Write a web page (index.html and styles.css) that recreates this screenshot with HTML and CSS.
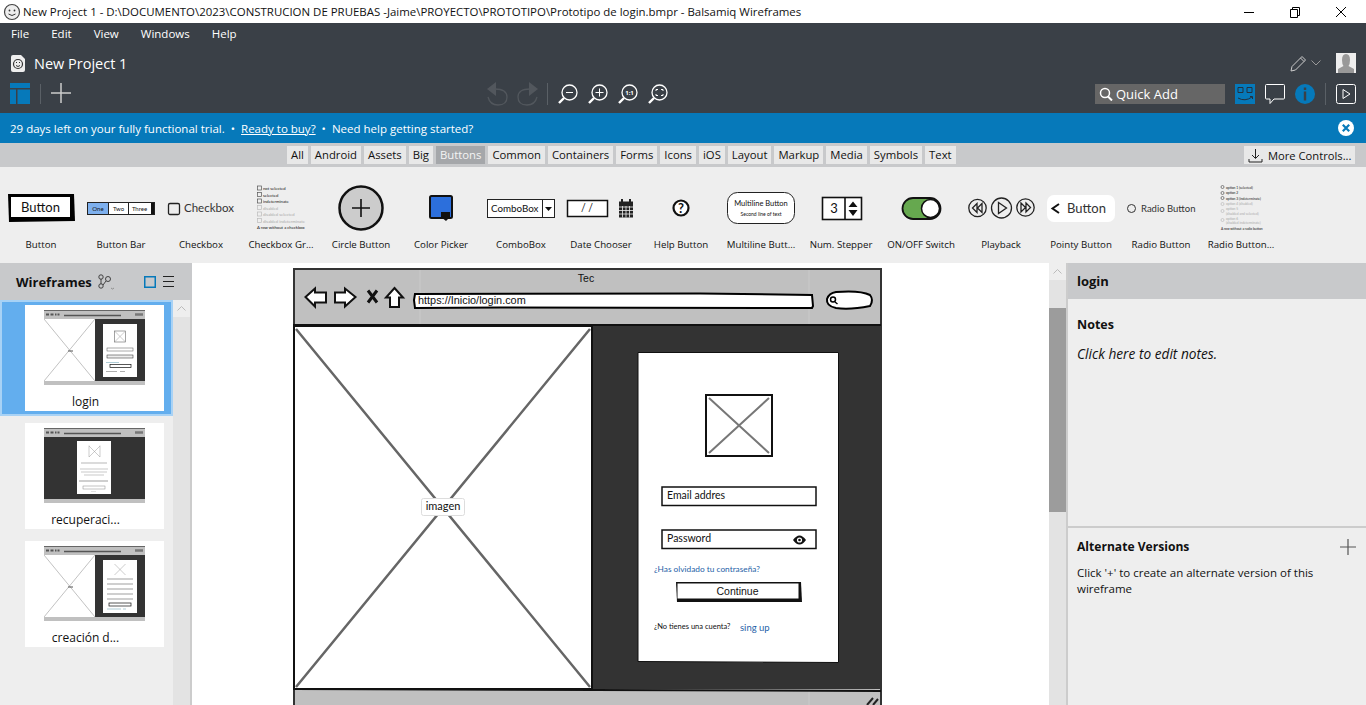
FILE: index.html
```html
<!DOCTYPE html>
<html lang="en">

<head>
    <meta charset="UTF-8">
    <title>New Project 1 - Balsamiq Wireframes</title>
    <link rel="stylesheet" href="styles.css">
</head>

<body>
    <svg class="defs" width="0" height="0">
        <symbol id="lens" viewBox="0 0 20 20">
            <circle cx="11.5" cy="8.5" r="7.5" fill="none" stroke="#fff" stroke-width="1.3"/>
            <path d="M6 14 L1 19" stroke="#fff" stroke-width="2.4"/>
        </symbol>
        <symbol id="thumb-bar" viewBox="0 0 101 75">
            <rect width="101" height="75" fill="#333"/>
            <rect width="101" height="9" fill="#c0c0c0"/>
            <rect y="71" width="101" height="4" fill="#c0c0c0"/>
            <rect width="101" height="1" fill="#666"/>
            <path d="M2 4.500h3M6.500 4.500h3M11 4.500h1.500M13.500 4.500h2" stroke="#555" stroke-width="2"/>
            <path d="M20 5.500 H77" stroke="#555" stroke-width="1.500"/>
            <path d="M91 4.500 H99" stroke="#777" stroke-width="2.500"/>
        </symbol>
    </svg>

    <!-- title bar -->
    <div class="titlebar">
        <svg class="app-face" width="18" height="18" viewBox="0 0 18 18">
            <circle cx="9" cy="9" r="7.500" fill="#eee" stroke="#444" stroke-width="1.200"/>
            <circle cx="6.500" cy="7.500" r=".9" fill="#333"/>
            <circle cx="11.500" cy="7.500" r=".9" fill="#333"/>
            <path d="M5.500 11 Q9 14 12.500 11" fill="none" stroke="#333"/>
        </svg>
        <span class="title-text">New Project 1 - D:\DOCUMENTO\2023\CONSTRUCION DE PRUEBAS -Jaime\PROYECTO\PROTOTIPO\Prototipo de login.bmpr - Balsamiq Wireframes</span>
        <div class="win-btns">
            <svg width="12" height="12" viewBox="0 0 12 12"><path d="M1 6.500H11" stroke="#000"/></svg>
            <svg width="12" height="12" viewBox="0 0 12 12"><path d="M1.500 3.500h7v8h-7z M3.500 3.500v-2h7v8h-2" fill="none" stroke="#000"/></svg>
            <svg width="12" height="12" viewBox="0 0 12 12"><path d="M1 1L11 11M11 1L1 11" stroke="#000"/></svg>
        </div>
    </div>

    <!-- dark header -->
    <header class="topbar">
        <nav class="menu">
            <span>File</span><span>Edit</span><span>View</span><span>Windows</span><span>Help</span>
        </nav>
        <div class="project-row">
            <svg width="14" height="17" viewBox="0 0 14 17">
                <path d="M0 2 Q0 0 2 0 H10 L14 4 V15 Q14 17 12 17 H2 Q0 17 0 15Z" fill="#eee"/>
                <circle cx="7" cy="9" r="4.500" fill="#eee" stroke="#333" stroke-width="1.200"/>
                <path d="M5 10.500 Q7 12.500 9 10.500M5 7.500h1M8 7.500h1" fill="none" stroke="#333"/>
            </svg>
            <span class="project-name">New Project 1</span>
            <div class="project-right">
                <svg width="17" height="17" viewBox="0 0 17 17"><path d="M1 16 L2 11.500 L12 1.500 L15.500 5 L5.500 15Z M10.500 3 L14 6.500" fill="none" stroke="#ccc"/></svg>
                <svg width="10" height="6" viewBox="0 0 10 6"><path d="M.5 .5L5 5L9.500 .5" fill="none" stroke="#999"/></svg>
                <svg class="avatar" width="20" height="20" viewBox="0 0 20 20">
                    <rect width="20" height="20" fill="#eee"/>
                    <path d="M6 7 Q6 1 10 1 Q14 1 14 7 Q14 11 12.500 13 L18 16 V20 H2 V16 L7.500 13 Q6 11 6 7Z" fill="#999"/>
                </svg>
            </div>
        </div>
        <div class="tool-row">
            <svg class="panel-icon" width="20" height="21" viewBox="0 0 20 21"><path d="M0 0H20V5H0ZM0 6.500H6V21H0ZM7.500 6.500H20V21H7.500Z" fill="#0679ba"/></svg>
            <span class="tool-sep"></span>
            <svg class="add-icon" width="20" height="20" viewBox="0 0 20 20"><path d="M10 0V20M0 10H20" stroke="#ccc" stroke-width="1.500"/></svg>
            <div class="tool-center">
                <svg width="21" height="24" viewBox="0 0 21 24">
                    <path d="M9 0 L0 7 L9 14Z" fill="#52575d"/>
                    <path d="M8 7 Q20 7 20 15 Q20 23 11 23 Q3 23 1 15" fill="none" stroke="#52575d" stroke-width="1.300"/>
                </svg>
                <svg width="21" height="24" viewBox="0 0 21 24">
                    <path d="M12 0 L21 7 L12 14Z" fill="#52575d"/>
                    <path d="M13 7 Q1 7 1 15 Q1 23 10 23 Q18 23 20 15" fill="none" stroke="#52575d" stroke-width="1.300"/>
                </svg>
                <span class="tool-sep tall"></span>
                <svg class="zoom-icon" width="20" height="20" viewBox="0 0 20 20"><use href="#lens"/><path d="M8 8.500H15" stroke="#fff"/></svg>
                <svg class="zoom-icon" width="20" height="20" viewBox="0 0 20 20"><use href="#lens"/><path d="M7.500 8.500H15.500M11.500 4.500V12.500" stroke="#fff"/></svg>
                <svg class="zoom-icon" width="20" height="20" viewBox="0 0 20 20"><use href="#lens"/><text x="11.500" y="11" class="one-one">1:1</text></svg>
                <svg class="zoom-icon" width="20" height="20" viewBox="0 0 20 20"><use href="#lens"/><path d="M8 7V5.500H10M13 5.500H15V7M15 10V11.500H13M10 11.500H8V10" fill="none" stroke="#fff"/></svg>
            </div>
            <div class="tool-right">
                <div class="quick-add">
                    <svg width="14" height="14" viewBox="0 0 14 14"><circle cx="6" cy="6" r="4.500" fill="none" stroke="#fff" stroke-width="1.500"/><path d="M9 9.500L13 13.500" stroke="#fff" stroke-width="2"/></svg>
                    <span>Quick Add</span>
                </div>
                <svg width="20" height="20" viewBox="0 0 20 20">
                    <rect width="20" height="20" fill="#0679ba"/>
                    <path d="M3 3.500h5v5h-5zM12 3.500h5v5h-5z" fill="none" stroke="#23313f"/>
                    <path d="M3 14 Q10 18 17 13M15 12.500h2.500v2.500" fill="none" stroke="#23313f"/>
                </svg>
                <svg width="20" height="20" viewBox="0 0 20 20"><path d="M1.500 .5H18.500Q19.500 .5 19.500 1.500V14Q19.500 15 18.500 15H9L5 19.500V15H1.500Q.5 15 .5 14V1.500Q.5 .5 1.500 .5Z" fill="none" stroke="#fff"/></svg>
                <svg width="20" height="20" viewBox="0 0 20 20"><circle cx="10" cy="10" r="10" fill="#0679ba"/><rect x="8.800" y="7.500" width="2.400" height="9" fill="#3a4047"/><rect x="8.800" y="3.500" width="2.400" height="2.500" fill="#3a4047"/></svg>
                <span class="tool-sep tall"></span>
                <svg width="20" height="20" viewBox="0 0 20 20"><rect x=".5" y=".5" width="19" height="19" rx="2" fill="none" stroke="#fff"/><path d="M7 5.500L14 10L7 14.500Z" fill="none" stroke="#fff"/></svg>
            </div>
        </div>
    </header>

    <!-- trial banner -->
    <div class="banner">
        <span>29 days left on your fully functional trial.</span>
        <span class="dot">•</span>
        <a href="#">Ready to buy?</a>
        <span class="dot">•</span>
        <span>Need help getting started?</span>
        <svg class="banner-close" width="16" height="16" viewBox="0 0 16 16"><circle cx="8" cy="8" r="8" fill="#fff"/><path d="M4.800 4.800L11.200 11.200M11.200 4.800L4.800 11.200" stroke="#0679ba" stroke-width="2.200"/></svg>
    </div>

    <!-- library tabs -->
    <div class="tabs">
        <div class="tab-list">
            <span class="tab">All</span><span class="tab">Android</span><span class="tab">Assets</span><span class="tab">Big</span><span class="tab active">Buttons</span><span class="tab">Common</span><span class="tab">Containers</span><span class="tab">Forms</span><span class="tab">Icons</span><span class="tab">iOS</span><span class="tab">Layout</span><span class="tab">Markup</span><span class="tab">Media</span><span class="tab">Symbols</span><span class="tab">Text</span>
        </div>
        <div class="more-controls">
            <svg width="15" height="15" viewBox="0 0 15 15"><path d="M7.500 1V10M4 7L7.500 10.500L11 7M1 11V14H14V11" fill="none" stroke="#222"/></svg>
            <span>More Controls...</span>
        </div>
    </div>

    <!-- component library -->
    <div class="library">
        <div class="lib-item">
            <svg viewBox="0 0 80 60" class="lib-pic">
                <path d="M7 16 L73 16 L74 43 L8 44Z" fill="#000"/>
                <rect x="10" y="19" width="59" height="20" fill="#fff"/>
                <text x="39.500" y="34" class="wf wf-center wf-13">Button</text>
            </svg>
            <span>Button</span>
        </div>
        <div class="lib-item">
            <svg viewBox="0 0 80 60" class="lib-pic">
                <rect x="6.500" y="24.500" width="67" height="12" fill="#fff" stroke="#222"/>
                <rect x="7" y="25" width="20" height="11" fill="#7eb0ee"/>
                <path d="M27.500 25V36M47.500 25V36" stroke="#222"/>
                <path d="M71.500 25V36" stroke="#111" stroke-width="3"/>
                <text x="17" y="33" class="wf wf-center wf-6">One</text>
                <text x="37.500" y="33" class="wf wf-center wf-6">Two</text>
                <text x="58.500" y="33" class="wf wf-center wf-6">Three</text>
            </svg>
            <span>Button Bar</span>
        </div>
        <div class="lib-item">
            <svg viewBox="0 0 80 60" class="lib-pic">
                <rect x="7.500" y="25.500" width="11" height="11" rx="1.500" fill="none" stroke="#222" stroke-width="1.300"/>
                <text x="23" y="34" class="wf wf-12 wf-soft">Checkbox</text>
            </svg>
            <span>Checkbox</span>
        </div>
        <div class="lib-item">
            <svg viewBox="0 0 80 60" class="lib-pic">
                <g fill="none" stroke="#555" stroke-width=".7">
                    <rect x="16.500" y="8" width="4" height="4"/><rect x="16.500" y="14.500" width="4" height="4"/><rect x="16.500" y="21" width="4" height="4"/>
                </g>
                <g fill="none" stroke="#bbb" stroke-width=".7">
                    <rect x="16.500" y="27.500" width="4" height="4"/><rect x="16.500" y="34" width="4" height="4"/><rect x="16.500" y="40.500" width="4" height="4"/>
                </g>
                <text x="22" y="12" class="wf wf-4">not selected</text>
                <text x="22" y="18.500" class="wf wf-4">selected</text>
                <text x="22" y="25" class="wf wf-4">indeterminate</text>
                <text x="22" y="31.500" class="wf wf-4 wf-off">disabled</text>
                <text x="22" y="38" class="wf wf-4 wf-off">disabled selected</text>
                <text x="22" y="44.500" class="wf wf-4 wf-off">disabled indeterminate</text>
                <text x="16" y="51" class="wf wf-4">A row without a checkbox</text>
            </svg>
            <span>Checkbox Gr...</span>
        </div>
        <div class="lib-item">
            <svg viewBox="0 0 80 60" class="lib-pic">
                <circle cx="40" cy="30" r="21.500" fill="#ccc" stroke="#111" stroke-width="2.500"/>
                <path d="M40 21V39M31 30H49" stroke="#111" stroke-width="1.600"/>
            </svg>
            <span>Circle Button</span>
        </div>
        <div class="lib-item">
            <svg viewBox="0 0 80 60" class="lib-pic">
                <rect x="29" y="18" width="22" height="22" rx="1.500" fill="#2c6fdc" stroke="#111" stroke-width="2"/>
                <path d="M40 34H49V39L45 43L40 39Z" fill="#111"/>
            </svg>
            <span>Color Picker</span>
        </div>
        <div class="lib-item">
            <svg viewBox="0 0 80 60" class="lib-pic">
                <rect x="6.500" y="21.500" width="67" height="18" fill="#fff" stroke="#222"/>
                <path d="M61.500 21.500V39.500" stroke="#222"/>
                <path d="M64 29H71L67.500 33Z" fill="#111"/>
                <text x="10" y="34" class="wf wf-10b">ComboBox</text>
            </svg>
            <span>ComboBox</span>
        </div>
        <div class="lib-item">
            <svg viewBox="0 0 80 60" class="lib-pic">
                <rect x="6.500" y="22.500" width="40" height="16" fill="#fff" stroke="#111" stroke-width="1.500"/>
                <text x="26" y="34" class="wf wf-center wf-10">/  /</text>
                <path d="M58 23.500H72V39.500H58Z" fill="#222"/>
                <path d="M61 21V25M69 21V25" stroke="#222" stroke-width="2"/>
                <path d="M58 29H72M58 32.500H72M58 36H72M61.500 28V39.500M65 28V39.500M68.500 28V39.500" stroke="#eee" stroke-width=".8"/>
            </svg>
            <span>Date Chooser</span>
        </div>
        <div class="lib-item">
            <svg viewBox="0 0 80 60" class="lib-pic">
                <circle cx="40" cy="30" r="7.500" fill="#fff" stroke="#111" stroke-width="2.200"/>
                <text x="40" y="34.500" class="wf wf-center wf-13 wf-bold">?</text>
            </svg>
            <span>Help Button</span>
        </div>
        <div class="lib-item">
            <svg viewBox="0 0 80 60" class="lib-pic">
                <rect x="6.500" y="14.500" width="67" height="31" rx="10" fill="#fff" stroke="#222"/>
                <text x="40" y="27.500" class="wf wf-center wf-7">Multiline Button</text>
                <text x="40" y="37.500" class="wf wf-center wf-5">Second line of text</text>
            </svg>
            <span>Multiline Butt...</span>
        </div>
        <div class="lib-item">
            <svg viewBox="0 0 80 60" class="lib-pic">
                <rect x="21.500" y="19.500" width="39" height="22" fill="#fff" stroke="#111" stroke-width="1.600"/>
                <path d="M44 19.500V41.500" stroke="#111" stroke-width="1.600"/>
                <path d="M47.500 29H56.500L52 23.500ZM47.500 32H56.500L52 38Z" fill="#111"/>
                <text x="33" y="35" class="wf wf-center wf-13">3</text>
            </svg>
            <span>Num. Stepper</span>
        </div>
        <div class="lib-item">
            <svg viewBox="0 0 80 60" class="lib-pic">
                <rect x="21.500" y="20" width="38" height="21" rx="10.500" fill="#66a84f" stroke="#111" stroke-width="1.800"/>
                <circle cx="49.500" cy="30.500" r="9" fill="#fff" stroke="#111" stroke-width="1.500"/>
            </svg>
            <span>ON/OFF Switch</span>
        </div>
        <div class="lib-item">
            <svg viewBox="0 0 80 60" class="lib-pic">
                <g fill="none" stroke="#222" stroke-width="1.300">
                    <circle cx="16.500" cy="30" r="8.700"/>
                    <circle cx="40.500" cy="30" r="10"/>
                    <circle cx="64.500" cy="29.500" r="8.700"/>
                    <path d="M16 25.500L11.500 30L16 34.500ZM21 25.500L16.500 30L21 34.500Z"/>
                    <path d="M37.500 24.500L45.500 30L37.500 35.500Z"/>
                    <path d="M60 25L64.500 29.500L60 34ZM65 25L69.500 29.500L65 34Z"/>
                </g>
            </svg>
            <span>Playback</span>
        </div>
        <div class="lib-item">
            <svg viewBox="0 0 80 60" class="lib-pic">
                <rect x="6" y="17" width="68" height="27" rx="7" fill="#fff"/>
                <path d="M18 26L11.500 30.500L18 35" fill="none" stroke="#111" stroke-width="2"/>
                <text x="26" y="35" class="wf wf-13 wf-soft">Button</text>
            </svg>
            <span>Pointy Button</span>
        </div>
        <div class="lib-item">
            <svg viewBox="0 0 80 60" class="lib-pic">
                <circle cx="10.500" cy="30.500" r="4" fill="none" stroke="#333"/>
                <text x="20" y="34" class="wf wf-9 wf-soft">Radio Button</text>
            </svg>
            <span>Radio Button</span>
        </div>
        <div class="lib-item">
            <svg viewBox="0 0 80 60" class="lib-pic">
                <g fill="none" stroke="#555" stroke-width=".7">
                    <circle cx="21.500" cy="9" r="1.500"/><circle cx="21.500" cy="15" r="1.500"/><circle cx="21.500" cy="20" r="1.500"/>
                </g>
                <g fill="none" stroke="#bbb" stroke-width=".7">
                    <circle cx="21.500" cy="26" r="1.500"/><circle cx="21.500" cy="33" r="1.500"/><circle cx="21.500" cy="42" r="1.500"/>
                </g>
                <text x="25" y="10.500" class="wf wf-3">option 1 (selected)</text>
                <text x="25" y="16" class="wf wf-3">option 2</text>
                <text x="25" y="21.500" class="wf wf-3">option 3 (indeterminate)</text>
                <text x="25" y="27" class="wf wf-3 wf-off">option 4 (disabled)</text>
                <text x="25" y="32" class="wf wf-3 wf-off">option 5</text>
                <text x="25" y="36.500" class="wf wf-3 wf-off">(disabled and selected)</text>
                <text x="25" y="41.500" class="wf wf-3 wf-off">option 6</text>
                <text x="25" y="46" class="wf wf-3 wf-off">(disabled indeterminate)</text>
                <text x="20" y="51.500" class="wf wf-3">A row without a radio button</text>
            </svg>
            <span>Radio Button...</span>
        </div>
    </div>

    <main class="workspace">
        <!-- wireframes list -->
        <aside class="wf-panel">
            <div class="wf-head">
                <span class="wf-head-title">Wireframes</span>
                <svg width="17" height="16" viewBox="0 0 17 16"><g fill="none" stroke="#333" stroke-width=".9"><circle cx="3" cy="3" r="2.200"/><circle cx="10" cy="5" r="2.500"/><circle cx="3" cy="12" r="2.200"/><path d="M3 5V10M5 11L8 7"/><path d="M13 14L14.500 15L16 14" stroke="#888"/></g></svg>
                <svg class="wf-view" width="12" height="12" viewBox="0 0 12 12"><rect x=".75" y=".75" width="10.500" height="10.500" fill="none" stroke="#0679ba" stroke-width="1.500"/></svg>
                <svg width="11" height="11" viewBox="0 0 11 11"><path d="M0 .5H11M0 5.500H11M0 10.500H11" stroke="#222"/></svg>
            </div>
            <div class="wf-body">
                <div class="wf-list">
                    <div class="wf-row selected">
                        <div class="wf-card">
                            <svg width="101" height="75" viewBox="0 0 101 75">
                                <use href="#thumb-bar" width="101" height="75"/>
                                <rect y="9" width="51" height="62" fill="#fff"/>
                                <path d="M0 9L51 71M51 9L0 71" stroke="#999" stroke-width=".6"/>
                                <path d="M24 41H29" stroke="#555" stroke-width="1"/>
                                <rect x="59" y="14" width="34" height="53" fill="#fff"/>
                                <rect x="70.500" y="21" width="11" height="11" fill="#fff" stroke="#666" stroke-width=".6"/>
                                <path d="M70.500 21L81.500 32M81.500 21L70.500 32" stroke="#999" stroke-width=".5"/>
                                <rect x="63" y="38" width="26" height="3" fill="#fff" stroke="#555" stroke-width=".5"/>
                                <rect x="63" y="45" width="26" height="3" fill="#eee" stroke="#222" stroke-width=".5"/>
                                <path d="M62 52.500H75" stroke="#7ab" stroke-width=".6"/>
                                <rect x="66" y="54.500" width="21" height="3" fill="#fff" stroke="#111" stroke-width=".7"/>
                                <path d="M62 61.500H73M76 61.500H81" stroke="#777" stroke-width=".6"/>
                            </svg>
                            <span class="wf-name">login</span>
                        </div>
                    </div>
                    <div class="wf-row">
                        <div class="wf-card">
                            <svg width="101" height="75" viewBox="0 0 101 75">
                                <use href="#thumb-bar" width="101" height="75"/>
                                <rect x="33" y="13" width="34" height="53" fill="#fff"/>
                                <path d="M45 17.500V29M56 17.500V29M45 18L56 29M56 18L45 29" stroke="#999" stroke-width=".5"/>
                                <path d="M37 35H63" stroke="#888" stroke-width=".6"/>
                                <path d="M36 41H64M37 44H63M40 47H60" stroke="#bbb" stroke-width=".8"/>
                                <path d="M35 53H64" stroke="#777" stroke-width=".7"/>
                                <rect x="39" y="58" width="22" height="3" fill="#fff" stroke="#888" stroke-width=".5"/>
                                <path d="M47 63.500H52" stroke="#ccc" stroke-width=".6"/>
                            </svg>
                            <span class="wf-name">recuperaci...</span>
                        </div>
                    </div>
                    <div class="wf-row">
                        <div class="wf-card">
                            <svg width="101" height="75" viewBox="0 0 101 75">
                                <use href="#thumb-bar" width="101" height="75"/>
                                <rect y="9" width="51" height="62" fill="#fff"/>
                                <path d="M0 9L51 71M51 9L0 71" stroke="#999" stroke-width=".6"/>
                                <path d="M24 41H29" stroke="#555" stroke-width="1"/>
                                <rect x="59" y="14" width="34" height="53" fill="#fff"/>
                                <path d="M70.500 18L81.500 29M81.500 18L70.500 29" stroke="#999" stroke-width=".5"/>
                                <path d="M63 33H89M63 38H89M63 43H89M63 48H89M63 53H89" stroke="#777" stroke-width=".7"/>
                                <rect x="65" y="57" width="22" height="3" fill="#fff" stroke="#111" stroke-width=".7"/>
                                <path d="M63 63H77M79 63H82" stroke="#7ab" stroke-width=".6"/>
                            </svg>
                            <span class="wf-name">creación d...</span>
                        </div>
                    </div>
                </div>
                <div class="wf-scroll">
                    <div class="scroll-up">
                        <svg width="9" height="5" viewBox="0 0 9 5"><path d="M.5 4.500L4.500 .5L8.500 4.500" fill="none" stroke="#bbb"/></svg>
                    </div>
                </div>
            </div>
        </aside>

        <!-- drawing canvas, the coordinates inside follow the screen -->
        <section class="canvas">
            <svg class="sketch" width="857" height="442" viewBox="192 263 857 442">
                <rect x="294" y="269" width="587" height="440" fill="#c0c0c0" stroke="#333" stroke-width="2"/>
                <path d="M420 270V325M809 270V325M809 690V705" stroke="#cacaca"/>
                <text x="586" y="282" class="wf-sans wf-center wf-10">Tec</text>

                <path d="M305.500 297 L315 288.500 V292.500 H326 V302.500 H315 V306.500Z" fill="#fff" stroke="#111" stroke-width="2"/>
                <path d="M355.500 297 L345 288.500 V292.500 H335 V302.500 H345 V306.500Z" fill="#fff" stroke="#111" stroke-width="2"/>
                <path d="M368 290.500L377 302.500M377 290.500L368 302.500" stroke="#111" stroke-width="3"/>
                <path d="M394.500 288 L403 297.500 H399 V307 H390 V297.500 H386Z" fill="#fff" stroke="#111" stroke-width="2"/>

                <path d="M415 294 L700 293.500 L812 295 L813 306 L812 308 L500 307.500 L415 308 L414 300Z" fill="#fff" stroke="#000" stroke-width="2"/>
                <text x="418" y="304" class="wf-sans wf-11">https://Inicio/login.com</text>
                <path d="M836 292 Q860 290 870 295 Q874 300 870 306 Q850 310 836 308 Q826 306 827 299 Q829 293 836 292Z" fill="#fff" stroke="#000" stroke-width="2"/>
                <circle cx="833" cy="299.500" r="2.500" fill="none" stroke="#000" stroke-width="1.500"/>
                <path d="M835 302L837.500 304" stroke="#000" stroke-width="1.500"/>

                <rect x="293" y="325" width="588" height="364" fill="#333"/>
                <rect x="294" y="326" width="298" height="363" fill="#fff" stroke="#111" stroke-width="2"/>
                <path d="M296 329L590 687M590 329L296 687" stroke="#666" stroke-width="2.500"/>
                <path d="M293 325H881" stroke="#111" stroke-width="2"/>
                <rect x="421.500" y="498.500" width="43" height="17" rx="2" fill="#fff" stroke="#ddd"/>
                <text x="443" y="510" class="wf wf-center wf-11">imagen</text>

                <path d="M638 352.500 H838.500 V662.500 L638 661.500Z" fill="#fff" stroke="#111"/>
                <rect x="706" y="395" width="66" height="61" fill="#fff" stroke="#111" stroke-width="2"/>
                <path d="M709 398L769 453M769 398L709 453" stroke="#777" stroke-width="2"/>

                <rect x="662" y="487" width="154" height="18.500" fill="#fff" stroke="#111" stroke-width="1.500"/>
                <text x="667" y="499" class="wf wf-10">Email addres</text>
                <rect x="662" y="530" width="154" height="18.500" fill="#fff" stroke="#111" stroke-width="1.500"/>
                <text x="667" y="542" class="wf wf-10">Password</text>
                <path d="M793 540 Q799.500 531 806 540 Q799.500 549 793 540Z" fill="#111"/>
                <circle cx="799.500" cy="540" r="2.600" fill="#fff"/>
                <circle cx="799.500" cy="540" r="1.300" fill="#111"/>

                <text x="654" y="572" class="wf wf-8 wf-link">¿Has olvidado tu contraseña?</text>
                <path d="M676 582 L801 582 L802 602 L677 602Z" fill="#111"/>
                <rect x="677.500" y="583.500" width="121" height="15" fill="#fff"/>
                <text x="737.500" y="595" class="wf-sans wf-center wf-10">Continue</text>
                <text x="654" y="629" class="wf wf-7">¿No tienes una cuenta?</text>
                <text x="740" y="631" class="wf wf-9 wf-link">sing up</text>

                <path d="M293 689 Q600 689 881 691" fill="none" stroke="#111" stroke-width="2"/>
                <path d="M867 705L873 698M873 705L878 699" stroke="#222" stroke-width="2"/>
            </svg>
        </section>

        <div class="canvas-scroll">
            <div class="scroll-up">
                <svg width="9" height="5" viewBox="0 0 9 5"><path d="M.5 4.500L4.500 .5L8.500 4.500" fill="none" stroke="#bbb"/></svg>
            </div>
            <div class="scroll-thumb"></div>
        </div>

        <!-- right inspector -->
        <aside class="inspector">
            <div class="insp-head">login</div>
            <div class="notes">
                <h3>Notes</h3>
                <p>Click here to edit notes.</p>
            </div>
            <div class="versions">
                <div class="versions-head">
                    <h3>Alternate Versions</h3>
                    <svg width="16" height="16" viewBox="0 0 16 16"><path d="M8 0V16M0 8H16" stroke="#555" stroke-width="1.200"/></svg>
                </div>
                <p>Click '+' to create an alternate version of this wireframe</p>
            </div>
        </aside>
    </main>
</body>

</html>
```

FILE: styles.css
```css
* {
    margin: 0;
    padding: 0;
    box-sizing: border-box;
}

html,
body {
    height: 705px;
    overflow: hidden;
}

body {
    font-family: "Open Sans", "Noto Sans", Arial, sans-serif;
    font-size: 12px;
    color: #111;
    background: #fff;
}

svg {
    display: block;
    flex: none;
}

.defs {
    position: absolute;
}

/* title bar */
.titlebar {
    height: 23px;
    display: flex;
    align-items: center;
    padding-left: 3px;
    background: #fff;
}

.title-text {
    margin-left: 2px;
    font-size: 11.450px;
    white-space: nowrap;
}

.win-btns {
    margin-left: auto;
    margin-right: 19px;
    display: flex;
    gap: 34px;
}

/* dark header */
.topbar {
    height: 90px;
    background: #3a4047;
    color: #fff;
    padding: 0 10px;
}

.menu {
    height: 20px;
    display: flex;
    align-items: center;
    gap: 22px;
    padding-left: 1px;
    font-size: 11.500px;
}

.project-row {
    height: 20px;
    margin-top: 10px;
    display: flex;
    align-items: center;
    padding-left: 1px;
}

.project-name {
    margin-left: 9px;
    font-size: 14.500px;
}

.project-right {
    margin-left: auto;
    display: flex;
    align-items: center;
    gap: 4px;
}

.avatar {
    margin-left: 11px;
}

.tool-row {
    height: 24px;
    margin-top: 9px;
    display: flex;
    align-items: center;
}

.panel-icon,
.add-icon {
    margin-bottom: 2px;
}

.tool-sep {
    width: 1px;
    height: 20px;
    margin: 0 10px;
    background: #5a6066;
}

.tool-sep.tall {
    height: 22px;
    margin: 0;
}

.tool-center {
    margin-left: 416px;
    display: flex;
    align-items: center;
    gap: 9px;
}

.tool-center .zoom-icon {
    margin-right: 1px;
}

.tool-center .tool-sep + .zoom-icon {
    margin-left: 1px;
}

.one-one {
    font-size: 6px;
    font-weight: 700;
    text-anchor: middle;
    fill: #fff;
}

.tool-right {
    margin-left: auto;
    display: flex;
    align-items: center;
    gap: 10px;
}

.quick-add {
    width: 130px;
    height: 20px;
    display: flex;
    align-items: center;
    gap: 3px;
    padding-left: 4px;
    background: #666;
    font-size: 13px;
}

/* trial banner */
.banner {
    height: 30px;
    display: flex;
    align-items: center;
    gap: 6px;
    padding: 0 12px 0 10px;
    background: #0679ba;
    color: #fff;
    font-size: 11.500px;
}

.banner a {
    color: #fff;
}

.banner-close {
    margin-left: auto;
}

/* tabs */
.tabs {
    height: 24px;
    display: flex;
    align-items: center;
    background: #c8c9cb;
    padding-left: 287px;
    padding-right: 11px;
}

.tab-list {
    display: flex;
    gap: 3px;
}

.tab {
    height: 18px;
    line-height: 18px;
    padding: 0 4px;
    background: #e8e8e8;
    font-size: 11.300px;
}

.tab.active {
    background: #a5a7aa;
    color: #f4f4f4;
}

.more-controls {
    margin-left: auto;
    width: 111px;
    height: 18px;
    display: flex;
    align-items: center;
    gap: 5px;
    padding-left: 4px;
    background: #e8e8e8;
    font-size: 11.200px;
    white-space: nowrap;
}

/* library */
.library {
    height: 96px;
    display: flex;
    padding: 11px 0 0 1px;
    background: #eee;
}

.lib-item {
    width: 80px;
    display: flex;
    flex-direction: column;
    align-items: center;
    font-size: 9.700px;
    line-height: 14px;
    white-space: nowrap;
}

.lib-pic {
    width: 80px;
    height: 60px;
}

/* sketch text */
.wf {
    font-family: Lato, "Noto Sans", sans-serif;
    fill: #111;
}

.wf-sans {
    font-family: "Liberation Sans", Arial, sans-serif;
    fill: #111;
}

.wf-center {
    text-anchor: middle;
}

.wf-bold {
    font-weight: 700;
}

.wf-soft {
    fill: #333;
}

.wf-off {
    fill: #aaa;
}

.wf-link {
    fill: #1f5fa8;
}

.wf-3 { font-size: 3.300px; }
.wf-4 { font-size: 4.200px; }
.wf-5 { font-size: 5px; }
.wf-6 { font-size: 6px; }
.wf-7 { font-size: 7.500px; }
.wf-8 { font-size: 8.300px; }
.wf-9 { font-size: 9.500px; }
.wf-10 { font-size: 10.500px; }
.wf-10b { font-size: 9.800px; }
.wf-11 { font-size: 11px; }
.wf-12 { font-size: 11.500px; }
.wf-13 { font-size: 13px; }

.wf-sans.wf-11 { font-size: 10.900px; }

/* workspace */
.workspace {
    height: 442px;
    display: flex;
}

.wf-panel {
    width: 192px;
    display: flex;
    flex-direction: column;
    border-right: 2px solid #ccc;
    background: #eee;
}

.wf-head {
    height: 37px;
    flex: none;
    display: flex;
    align-items: center;
    padding: 0 0 0 16px;
    background: #c8c9cb;
    margin-right: -2px;
}

.wf-head-title {
    width: 82px;
    font-size: 13px;
    font-weight: 700;
}

.wf-view {
    margin: 0 7px 0 29px;
}

.wf-body {
    flex: 1;
    display: flex;
}

.wf-list {
    width: 173px;
    display: flex;
    flex-direction: column;
    gap: 12px;
}

.wf-row {
    padding-left: 25px;
    padding-right: 9px;
}

.wf-row.selected {
    height: 116px;
    padding: 3px 7px 0 23px;
    margin-bottom: -5px;
    background: #63aeee;
    border: 2px solid #a8d2f5;
}

.wf-card {
    height: 106px;
    display: flex;
    flex-direction: column;
    align-items: center;
    padding-top: 5px;
    background: #fff;
}

.wf-name {
    margin-top: 8px;
    margin-right: 18px;
    font-size: 12px;
    line-height: 18px;
}

.wf-scroll {
    width: 17px;
    background: #e3e3e3;
}

.scroll-up {
    height: 17px;
    display: flex;
    align-items: center;
    justify-content: center;
    background: #eee;
}

/* canvas */
.canvas {
    width: 857px;
    background: #fff;
    overflow: hidden;
}

.canvas-scroll {
    width: 17px;
    background: #e3e3e3;
}

.scroll-thumb {
    height: 204px;
    margin-top: 28px;
    background: #9c9c9c;
}

/* inspector */
.inspector {
    flex: 1;
    display: flex;
    flex-direction: column;
    border-left: 2px solid #ccc;
    background: #eee;
}

.inspector h3 {
    font-size: 12.500px;
    font-weight: 700;
}

.insp-head {
    height: 36px;
    line-height: 36px;
    padding-left: 9px;
    background: #c8c9cb;
    font-size: 13px;
    font-weight: 700;
}

.notes {
    height: 229px;
    padding: 17px 9px 0;
    border-bottom: 2px solid #ccc;
}

.notes p {
    margin-top: 11px;
    font-size: 13.700px;
    font-style: italic;
}

.versions {
    padding: 10px 10px 0 9px;
}

.versions .versions-head h3 {
    font-size: 12.100px;
}

.versions-head {
    display: flex;
    align-items: center;
    justify-content: space-between;
}

.versions p {
    margin-top: 10px;
    font-size: 11.500px;
    line-height: 16px;
}
```
